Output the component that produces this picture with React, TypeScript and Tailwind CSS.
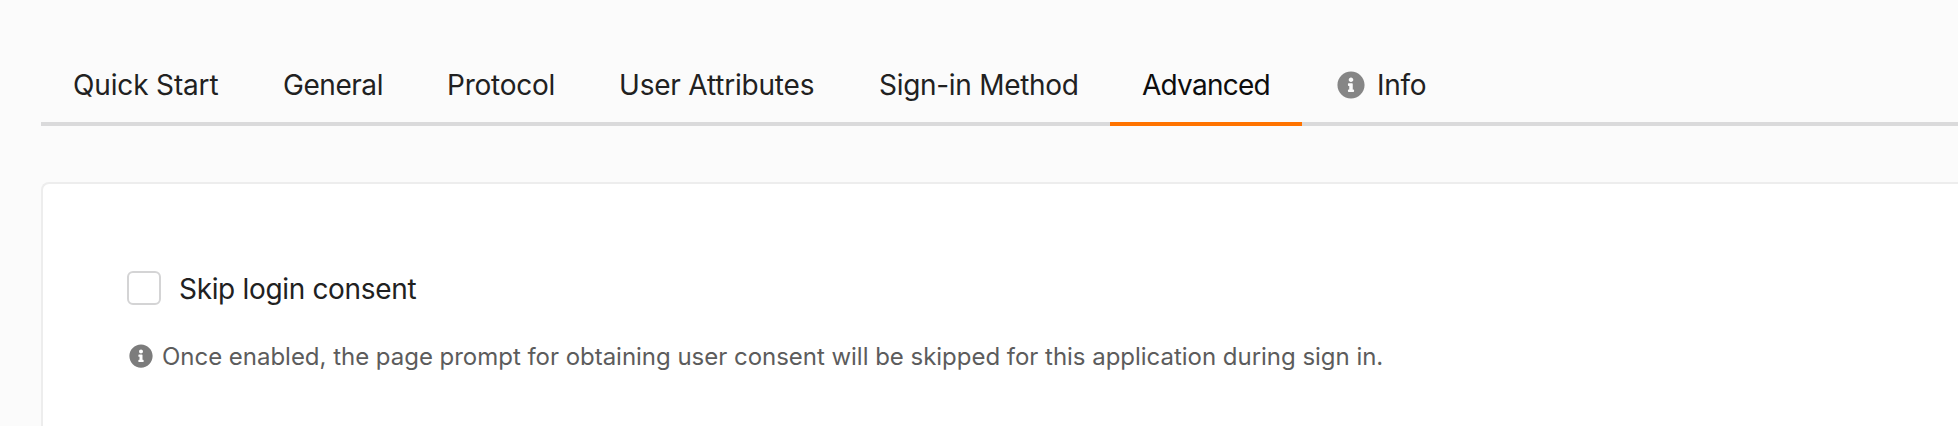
import { FaInfoCircle } from "react-icons/fa";

const tabs = [
  { label: "Quick Start", width: "w-[210px]", spacing: "tracking-[-0.15px]" },
  { label: "General", width: "w-[164px]", spacing: "tracking-[-0.45px]" },
  { label: "Protocol", width: "w-[172px]", spacing: "tracking-[-0.25px]" },
  { label: "User Attributes", width: "w-[260px]", spacing: "tracking-[-0.2px]" },
  { label: "Sign-in Method", width: "w-[263px]", spacing: "tracking-[-0.3px]" },
  { label: "Advanced", width: "w-[192px]", spacing: "tracking-[-0.75px]", active: true },
  { label: "Info", width: "w-[192px]", spacing: "tracking-[-0.3px]", icon: true },
];

function TabBar() {
  return (
    <nav className="flex h-[78px] border-b-4 border-[#dadadb]">
      {tabs.map((tab) => (
        <button
          key={tab.label}
          className={`-mb-1 flex h-[78px] shrink-0 items-center whitespace-nowrap border-b-4 px-8 text-[28px] leading-8 ${tab.width} ${tab.spacing} ${
            tab.active ? "border-[#ff7300] text-[#0d0d0d]" : "border-transparent text-[#212121]"
          }`}
        >
          {tab.icon && <FaInfoCircle className="mb-px ml-[3px] mr-3 size-7 shrink-0 text-[#868686]" />}
          <span>{tab.label}</span>
        </button>
      ))}
    </nav>
  );
}

export default function App() {
  return (
    <main className="h-[426px] overflow-hidden bg-[#fbfbfb] pl-[41px] pt-12 font-['Inter','Liberation_Sans',sans-serif]">
      <TabBar />
      <section className="mt-14 h-[260px] rounded-tl-lg border-l-2 border-t-2 border-[#ededed] bg-white pl-[84px] pt-[87px]">
        <label className="flex h-[34px] items-center text-[28px] leading-[34px] text-[#212121]">
          <span className="mr-[18px] size-[34px] shrink-0 rounded-md border-2 border-[#d4d4d5] bg-white" />
          <span className="whitespace-nowrap pt-0.5 tracking-[-0.33px]">Skip login consent</span>
        </label>
        <p className="mt-9 flex h-8 items-center whitespace-nowrap text-[24px] leading-8 text-[#5c5c5c]">
          <FaInfoCircle className="mb-0.5 ml-0.5 mr-[9px] size-6 shrink-0 text-[#7c7c7c]" />
          <span className="tracking-[-0.025px]">
            Once enabled, the page prompt for obtaining user consent will be skipped for this application during sign in.
          </span>
        </p>
      </section>
    </main>
  );
}
